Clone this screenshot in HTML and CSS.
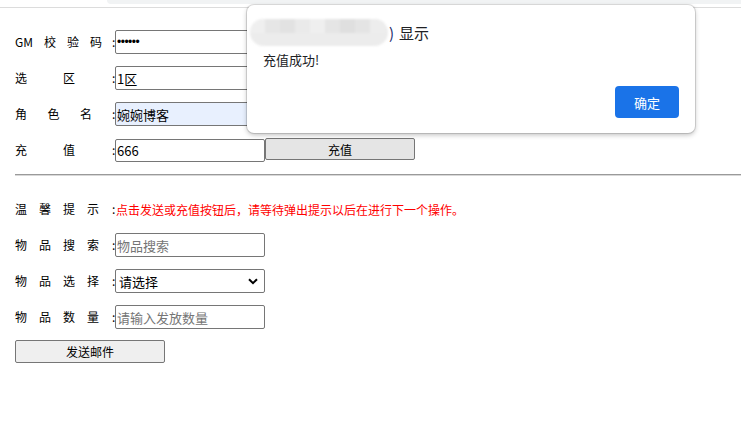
FILE: index.html
```html
<!DOCTYPE html>
<html lang="zh">
<head>
<meta charset="utf-8">
<title>GM</title>
<link rel="stylesheet" href="styles.css">
</head>
<body>
<div class="topbar"><div class="tabstrip"></div></div>

<div class="page">
  <div class="row">
    <label class="lbl"><span class="chars w87"><span>GM</span><span>校</span><span>验</span><span>码</span></span><span class="colon">:</span></label>
    <input class="field pwd" type="password" value="123456">
  </div>
  <div class="row">
    <label class="lbl"><span class="chars w60"><span>选</span><span>区</span></span><span class="colon">:</span></label>
    <input class="field" type="text" value="1区">
  </div>
  <div class="row">
    <label class="lbl"><span class="chars w77"><span>角</span><span>色</span><span>名</span></span><span class="colon">:</span></label>
    <input class="field autofill" type="text" value="婉婉博客">
  </div>
  <div class="row">
    <label class="lbl"><span class="chars w60"><span>充</span><span>值</span></span><span class="colon">:</span></label>
    <input class="field short" type="text" value="666">
    <button class="btn btn-hover">充值</button>
  </div>

  <hr class="divider">

  <div class="tip">
    <label class="lbl"><span class="chars w84"><span>温</span><span>馨</span><span>提</span><span>示</span></span><span class="colon">:</span></label>
    <span class="tip-text">点击发送或充值按钮后，请等待弹出提示以后在进行下一个操作。</span>
  </div>
  <div class="row">
    <label class="lbl"><span class="chars w84"><span>物</span><span>品</span><span>搜</span><span>索</span></span><span class="colon">:</span></label>
    <input class="field" type="text" placeholder="物品搜索">
  </div>
  <div class="row">
    <label class="lbl"><span class="chars w84"><span>物</span><span>品</span><span>选</span><span>择</span></span><span class="colon">:</span></label>
    <div class="select"><span>请选择</span>
      <svg class="chev" width="10" height="7" viewBox="0 0 10 7"><path d="M1 1.2 L5 5.2 L9 1.2" fill="none" stroke="#000" stroke-width="2"/></svg>
    </div>
  </div>
  <div class="row">
    <label class="lbl"><span class="chars w84"><span>物</span><span>品</span><span>数</span><span>量</span></span><span class="colon">:</span></label>
    <input class="field" type="text" placeholder="请输入发放数量">
  </div>
  <div class="row last">
    <button class="btn">发送邮件</button>
  </div>
</div>

<div class="dialog">
  <div class="dlg-title">
    <span class="blur"><i class="b1"></i><i class="b2"></i><i class="b3"></i><i class="b4"></i><i class="b5"></i><i class="b6"></i><i class="b7"></i><i class="b8"></i><i class="b9"></i></span><span class="paren">)</span><span class="show">显示</span>
  </div>
  <div class="dlg-msg">充值成功!</div>
  <div class="dlg-actions"><button class="ok">确定</button></div>
</div>
</body>
</html>
```
FILE: styles.css
```css
html, body {
  margin: 0;
  padding: 0;
  background: #fff;
}
body {
  font-family: "Noto Sans CJK SC", "Noto Sans", sans-serif;
  font-size: 12px;
  color: #000;
  width: 741px;
  height: 429px;
  overflow: hidden;
  position: relative;
}
.topbar {
  height: 7px;
  border-bottom: 1px solid #dcdcdc;
  display: flex;
  justify-content: flex-end;
}
.tabstrip {
  width: 634px;
  height: 4px;
  background: #f1f3f4;
  border-bottom-left-radius: 5px;
}
.page {
  padding: 22px 0 0 15px;
}
.row {
  display: flex;
  align-items: center;
  height: 24px;
  margin-bottom: 12px;
}
.row.last {
  align-items: flex-start;
  margin-top: -1px;
}
.lbl {
  width: 100px;
  display: flex;
  justify-content: space-between;
  align-items: center;
  line-height: 16px;
}
.chars {
  display: flex;
  justify-content: space-between;
}
.w87 { width: 87px; }
.w84 { width: 84px; }
.w77 { width: 77px; }
.w60 { width: 60px; }
.colon {
  width: 3px;
}
.field {
  box-sizing: border-box;
  width: 150px;
  height: 24px;
  border: 1px solid #767676;
  border-radius: 2px;
  padding: 1px 1px;
  margin: 0;
  font-family: "Noto Sans CJK SC", "Liberation Sans", sans-serif;
  font-size: 13px;
  color: #000;
  background: #fff;
  outline: none;
}
.field.pwd {
  font-family: "Liberation Sans", sans-serif;
  font-size: 12px;
  letter-spacing: -0.5px;
}
.field::placeholder {
  color: #757575;
}
.field.short {
  height: 23px;
  width: 150px;
}
.autofill {
  background: #e8f0fe;
}
.btn {
  box-sizing: border-box;
  width: 150px;
  height: 23px;
  border: 1px solid #767676;
  border-radius: 2px;
  background: #efefef;
  font-family: "Noto Sans CJK SC", sans-serif;
  font-size: 12px;
  color: #000;
  padding: 0;
  margin: 0;
}
.btn-hover {
  background: #e5e5e5;
  height: 22px;
  align-self: flex-start;
}
.divider {
  margin: 11px 0 0 0;
  border: 0;
  border-top: 1px solid #9a9a9a;
  border-bottom: 1px solid #d8d8d8;
  height: 0;
}
.tip {
  display: flex;
  align-items: center;
  height: 24px;
  margin-top: 21px;
  margin-bottom: 12px;
}
.tip-text {
  color: #ff0000;
  font-size: 12px;
  margin-left: 1px;
}
.select {
  box-sizing: border-box;
  width: 150px;
  height: 24px;
  border: 1px solid #767676;
  border-radius: 2px;
  display: flex;
  align-items: center;
  justify-content: space-between;
  padding: 0 6px 0 3px;
  font-size: 13px;
}
.dialog {
  position: absolute;
  left: 247px;
  top: 5px;
  width: 448px;
  height: 128px;
  box-sizing: border-box;
  background: #fff;
  border-radius: 7px;
  box-shadow: 0 0 0 1px rgba(0,0,0,0.12), 0 2px 5px rgba(0,0,0,0.25);
  padding: 12px 16px 0 16px;
}
.dlg-title {
  display: flex;
  align-items: center;
  height: 30px;
  margin-left: -13px;
}
.blur {
  display: grid;
  grid-template-columns: repeat(9, 15px);
  grid-template-rows: 14px 14px;
  width: 138px;
  height: 27px;
  border-radius: 14px;
  overflow: hidden;
  background: #ececec;
  filter: blur(1px);
}
.blur i { display: block; }
.b1 { background: #efefef; }
.b2 { background: #e6e6e6; }
.b3 { background: #e2e2e2; }
.b4 { background: #eaeaea; }
.b5 { background: #efefef; }
.b6 { background: #e5e5e5; }
.b7 { background: #dfdfdf; }
.b8 { background: #e4e4e4; }
.b9 { background: #ededed; }
.paren {
  font-size: 15px;
  color: #1a2b6b;
  margin-left: 1px;
}
.show {
  font-size: 15px;
  color: #202124;
  margin-left: 5px;
}
.dlg-msg {
  font-size: 13px;
  color: #202124;
  margin-top: 4px;
  line-height: 18px;
}
.dlg-actions {
  display: flex;
  justify-content: flex-end;
  margin-top: 17px;
}
.ok {
  width: 64px;
  height: 32px;
  border: 0;
  border-radius: 4px;
  background: #1a73e8;
  color: #fff;
  font-family: "Noto Sans CJK SC", sans-serif;
  font-size: 13px;
  padding: 0;
}
```
